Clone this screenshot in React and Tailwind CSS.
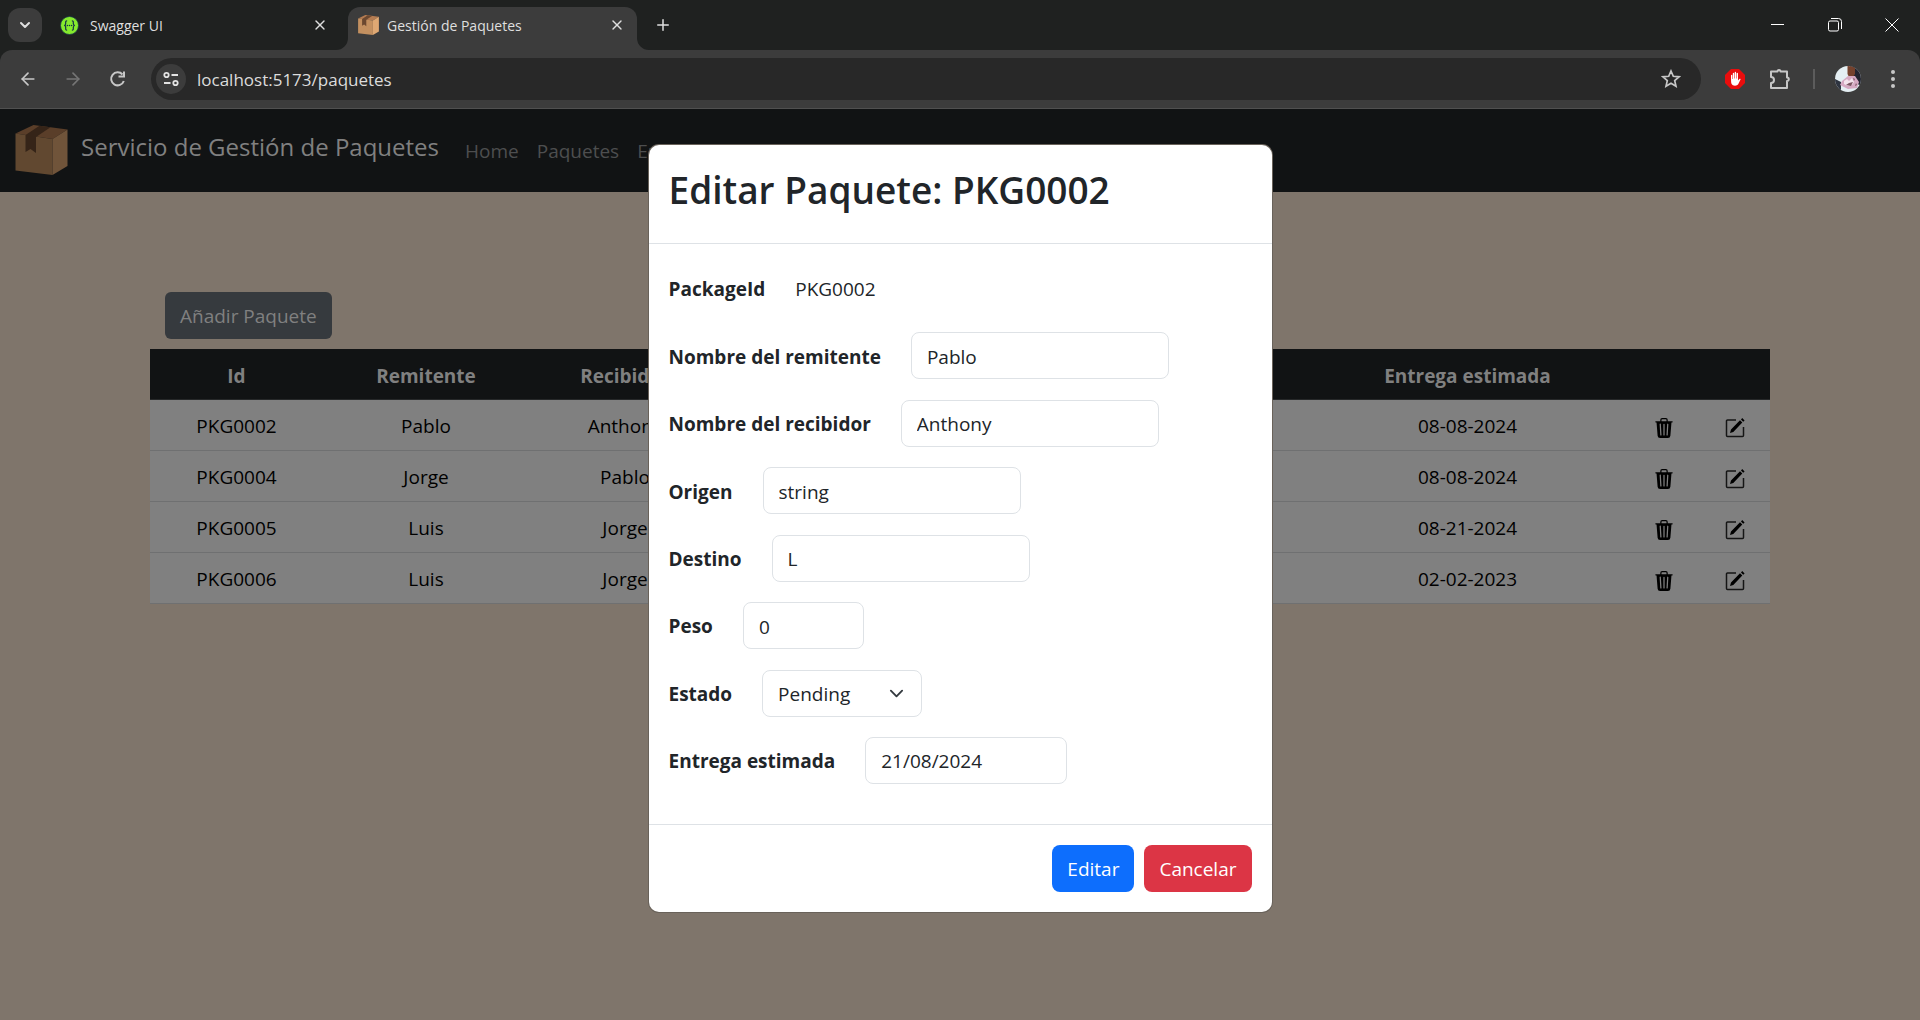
import { BsTrash3Fill } from 'react-icons/bs';
import { ChevronDown, X, Plus, ArrowLeft, ArrowRight } from 'lucide-react';

function BoxIcon({ className, dim }) {
  const c = dim
    ? { top: '#5a3e29', front: '#614830', side: '#70543a', tape: '#352418' }
    : { top: '#b57c52', front: '#c39060', side: '#dfa873', tape: '#6b4830' };
  return (
    <svg viewBox="0 0 52 50" className={className} aria-hidden="true">
      <path d="M0 8.500 18 0 52 4.500 37 14z" fill={c.top} />
      <path d="M0 8.500 37 14V50L0 45.500z" fill={c.front} />
      <path d="M37 14 52 4.500V41L37 50z" fill={c.side} />
      <path d="M24 .8 35 2.300 20.500 12V28L15 24 10 27V10z" fill={c.tape} />
    </svg>
  );
}

function SwaggerIcon() {
  return (
    <svg viewBox="0 0 20 20" className="size-[19px] shrink-0" aria-hidden="true">
      <circle cx="10" cy="10" r="9.500" fill="#85ea2d" stroke="#173647" strokeWidth=".8" />
      <g stroke="#173647" strokeWidth="1.300" fill="none">
        <path d="M7.500 5C5.500 5 6 6.500 6 8c0 1.300-.5 2-1.700 2 1.200 0 1.700.7 1.700 2 0 1.500-.5 3 1.500 3M12.500 5c2 0 1.500 1.500 1.500 3 0 1.300.5 2 1.700 2-1.200 0-1.700.7-1.700 2 0 1.500.5 3-1.500 3" />
      </g>
      <g fill="#173647"><circle cx="7.800" cy="10" r=".8" /><circle cx="10" cy="10" r=".8" /><circle cx="12.200" cy="10" r=".8" /></g>
    </svg>
  );
}

function TabBar() {
  return (
    <div className="flex h-[50px] items-start bg-[#1f2120] pl-2 text-[#dfdfdf]">
      <button aria-label="Buscar pestañas" className="mt-2 grid h-[34px] w-[34px] place-items-center rounded-xl bg-[#3c3c3c]">
        <ChevronDown className="size-4" strokeWidth={3} />
      </button>
      <div className="mt-[7px] flex h-9 w-[306px] items-center pr-5 pl-[18px] text-[14px]">
        <SwaggerIcon />
        <span className="flex-1 pl-[11px]">Swagger UI</span>
        <button aria-label="Cerrar Swagger UI"><X className="size-4" /></button>
      </div>
      <div className="relative mt-[7px] flex h-[43px] w-[289px] items-start rounded-t-xl bg-[#3c3c3c] pr-[12px] pl-[10px] text-[14px]">
        <svg viewBox="0 0 12 12" className="absolute bottom-0 -left-3 size-3" aria-hidden="true"><path d="M12 0v12H0A12 12 0 0 0 12 0z" fill="#3c3c3c" /></svg>
        <svg viewBox="0 0 12 12" className="absolute -right-3 bottom-0 size-3" aria-hidden="true"><path d="M0 0v12h12A12 12 0 0 1 0 0z" fill="#3c3c3c" /></svg>
        <div className="flex h-9 flex-1 items-center">
          <BoxIcon className="h-5 w-[21px]" />
          <span className="flex-1 pl-2">Gestión de Paquetes</span>
          <button aria-label="Cerrar Gestión de Paquetes"><X className="size-4" /></button>
        </div>
      </div>
      <button aria-label="Nueva pestaña" className="mt-4 ml-[17px]"><Plus className="size-[18px]" /></button>
      <div className="mt-[18px] ml-auto flex items-center gap-[43px] pr-[21px]">
        <button aria-label="Minimizar"><svg viewBox="0 0 14 14" className="size-[14px]"><path d="M0 6.500h13" stroke="#fff" /></svg></button>
        <button aria-label="Restaurar"><svg viewBox="0 0 14 14" className="size-[14px]" fill="none" stroke="#fff"><rect x=".5" y="3" width="10" height="10" rx="1.500" /><path d="M3 .5h7.500a3 3 0 0 1 3 3V11" /></svg></button>
        <button aria-label="Cerrar ventana"><svg viewBox="0 0 14 14" className="size-[14px]" stroke="#fff"><path d="m.5.5 13 13m0-13-13 13" /></svg></button>
      </div>
    </div>
  );
}

function Toolbar() {
  return (
    <div className="bg-[#1f2120]">
      <div className="flex h-[59px] items-center rounded-t-xl border-b border-[#505050] bg-[#3c3c3c] pr-[21px] pl-[18px] text-[#c7c7c7]">
        <button aria-label="Atrás"><ArrowLeft className="size-5" /></button>
        <button aria-label="Adelante" className="ml-[25px] text-[#757575]"><ArrowRight className="size-5" /></button>
        <button aria-label="Recargar" className="ml-6">
          <svg viewBox="0 0 20 20" className="size-5" fill="none" stroke="currentColor" strokeWidth="2"><path d="M15.500 5.500A6.500 6.500 0 1 0 16.800 12M17 2.500V7.500H11.500" /></svg>
        </button>
        <div className="ml-6 flex h-[42px] flex-1 items-center rounded-full bg-[#282828] pr-5 pl-[5px]">
          <button aria-label="Información del sitio" className="grid size-[30px] place-items-center rounded-full bg-[#3c3c3c]">
            <svg viewBox="0 0 16 16" className="size-4" fill="none" stroke="#e3e3e3" strokeWidth="1.800"><circle cx="3.500" cy="4" r="2.200" /><path d="M8.500 4H15M1 12h6.500" /><circle cx="12.500" cy="12" r="2.200" /></svg>
          </button>
          <input aria-label="Dirección" defaultValue="localhost:5173/paquetes" className="ml-[11px] min-w-0 flex-1 bg-transparent pt-0.5 text-[17px] text-[#dcdcdc] outline-none" />
          <button aria-label="Añadir a marcadores">
            <svg viewBox="0 0 20 20" className="size-5" fill="none" stroke="currentColor" strokeWidth="1.700"><path d="m10 2 2.300 5.300 5.700.5-4.300 3.800 1.300 5.700-5-3-5 3 1.300-5.700L2 7.800l5.700-.5z" /></svg>
          </button>
        </div>
        <button aria-label="Bloqueador de anuncios" className="ml-6">
          <svg viewBox="0 0 20 20" className="size-5"><path d="M6 0h8l6 6v8l-6 6H6l-6-6V6z" fill="#e90d0d" /><path d="M6 6.500c0-1 1.300-1 1.300 0V10h.5V4.500c0-1 1.400-1 1.400 0V9.500h.5V3.600c0-1 1.400-1 1.400 0v5.900h.5V4.500c0-1 1.400-1 1.400 0v7l1.300-1.500c.7-.7 1.600-.1 1.200.6l-2.300 4.600C12.300 17 7.600 17.500 6.400 14.500 6 13.500 6 10 6 6.500z" fill="#fff" /></svg>
        </button>
        <button aria-label="Extensiones" className="ml-6">
          <svg viewBox="0 0 22 22" className="size-[22px]" fill="none" stroke="currentColor" strokeWidth="2" strokeLinejoin="round"><path d="M2 3.500h6.500a1.500 1.500 0 0 1 3 0H18V9.500a1.800 1.800 0 0 1 0 3.600V20H2V15a2.800 2.800 0 0 0 0-6z" /></svg>
        </button>
        <span className="ml-[22px] h-5 w-[2px] bg-[#5c5c5c]" />
        <button aria-label="Perfil" className="ml-5">
          <svg viewBox="0 0 26 26" className="size-[26px]">
            <clipPath id="avatar"><circle cx="13" cy="13" r="13" /></clipPath>
            <g clipPath="url(#avatar)"><path d="M0 0h26v26H0z" fill="#e4eef2" /><path d="M15 0h11v20l-7-4z" fill="#23242f" /><path d="M0 13l6 3v10H0z" fill="#2e3440" /><path d="M12.500 0H20v8l-2 3h-4l-1.500-3z" fill="#75412c" /><path d="M7 15l6-5 7 0 4 6-2 6-9 1-8-4z" fill="#d5a9c2" /><path d="m9 15 3-2 2 2 3-3 2 4-2 3-4 1-4-2z" fill="#f3e3ec" /><path d="m14 17 4-1-2 4-5-1zM18 12l2 1-1 2zM21 17l1 2-2 1z" fill="#7b5662" /></g>
          </svg>
        </button>
        <button aria-label="Menú" className="ml-[26px]"><svg viewBox="0 0 12 20" className="h-5 w-3" fill="currentColor"><circle cx="6" cy="3" r="2" /><circle cx="6" cy="10" r="2" /><circle cx="6" cy="17" r="2" /></svg></button>
      </div>
    </div>
  );
}

const rows = [
  ['PKG0002', 'Pablo', 'Anthony', '08-08-2024'],
  ['PKG0004', 'Jorge', 'Pablo', '08-08-2024'],
  ['PKG0005', 'Luis', 'Jorge', '08-21-2024'],
  ['PKG0006', 'Luis', 'Jorge', '02-02-2023'],
];

function EditIcon() {
  return (
    <svg viewBox="0 0 20 20" className="size-5" aria-hidden="true">
      <path d="M11 2H2.500a1 1 0 0 0-1 1v14.500a1 1 0 0 0 1 1h15a1 1 0 0 0 1-1V9" fill="none" stroke="#151515" strokeWidth="1.500" />
      <path d="m15 2.300 2.300 2.300-9 9.500L5 15l1-3.500zM16 1.400 17.200 0 19.600 2.400 18.200 3.700z" fill="#000" />
    </svg>
  );
}

function PackagesPage() {
  return (
    <div className="flex-1 bg-[#7f756b] text-[19px]">
      <nav className="flex h-[83px] items-center bg-[#111314] pl-[15px]">
        <a href="#inicio" className="flex items-center pb-0.5 text-[24px] text-[#808080]">
          <BoxIcon dim className="h-[50px] w-[53px]" />
          <span className="pb-1.5 pl-[13px]">Servicio de Gestión de Paquetes</span>
        </a>
        <div className="flex gap-[18px] pt-0.5 pl-[26px] text-[#4d4e4f]">
          <a href="#home">Home</a>
          <a href="#paquetes">Paquetes</a>
          <a href="#envios">Envios</a>
          <a href="#estados">Estados</a>
        </div>
      </nav>
      <main className="px-[150px] pt-[100px]">
        <button className="ml-[15px] h-[47px] rounded-md bg-[#363a3e] px-[15px] pt-0.5 text-[#808080]">Añadir Paquete</button>
        <table className="mt-[10px] w-full table-fixed text-center">
          <colgroup>
            <col className="w-[173px]" /><col className="w-[206px]" /><col className="w-[192px]" /><col /><col className="w-[321px]" /><col className="w-[72px]" /><col className="w-[70px]" />
          </colgroup>
          <thead>
            <tr className="h-[50px] border-b border-[#262829] bg-[#111314] text-[#808080]">
              <th className="pt-1 font-bold">Id</th>
              <th className="pt-1 font-bold">Remitente</th>
              <th className="pt-1 font-bold">Recibidor</th>
              <th />
              <th className="pt-1 font-bold">Entrega estimada</th>
              <th />
              <th />
            </tr>
          </thead>
          <tbody>
            {rows.map(([id, sender, receiver, date]) => (
              <tr key={id} className="h-[51px] border-b border-[#6f7071] bg-[#808080] text-black">
                <td className="pt-1">{id}</td>
                <td className="pt-1">{sender}</td>
                <td className="pt-1">{receiver}</td>
                <td />
                <td className="pt-1">{date}</td>
                <td className="pt-1"><button aria-label="Eliminar" className="align-middle"><BsTrash3Fill className="size-5" /></button></td>
                <td className="pt-1"><button aria-label="Editar fila" className="align-middle"><EditIcon /></button></td>
              </tr>
            ))}
          </tbody>
        </table>
      </main>
    </div>
  );
}

const field = 'h-[47px] rounded-lg border border-[#dee2e6] bg-white px-[15px] pt-0.5 outline-none';

function Row({ id, label, children }) {
  return (
    <div className="flex h-[47px] items-center gap-[30px]">
      <label htmlFor={id} className="pt-0.5 font-bold">{label}</label>
      {children}
    </div>
  );
}

function EditModal() {
  return (
    <div className="absolute inset-x-0 top-[145px] flex justify-center">
      <div role="dialog" aria-labelledby="modal-title" className="w-[623px] rounded-[10px] bg-white text-[19px] text-[#212529] shadow-[0_0_0_1px_#69625a]">
        <header className="h-[99px] border-b border-[#dee2e6] px-5 pt-5">
          <h1 id="modal-title" className="text-[37px] leading-[50px] font-semibold">Editar Paquete: PKG0002</h1>
        </header>
        <form className="flex min-h-[580px] flex-col justify-between px-5 pt-[21px] pb-10">
          <Row id="pid" label="PackageId"><output id="pid" className="pt-0.5">PKG0002</output></Row>
          <Row id="rem" label="Nombre del remitente"><input id="rem" defaultValue="Pablo" className={`${field} w-[258px]`} /></Row>
          <Row id="rec" label="Nombre del recibidor"><input id="rec" defaultValue="Anthony" className={`${field} w-[258px]`} /></Row>
          <Row id="ori" label="Origen"><input id="ori" defaultValue="string" className={`${field} w-[258px]`} /></Row>
          <Row id="des" label="Destino"><input id="des" defaultValue="L" className={`${field} w-[258px]`} /></Row>
          <Row id="pes" label="Peso"><input id="pes" defaultValue="0" className={`${field} w-[121px]`} /></Row>
          <Row id="est" label="Estado">
            <div className="relative">
              <select id="est" className={`${field} w-[160px] appearance-none`}><option>Pending</option></select>
              <svg viewBox="0 0 16 16" className="pointer-events-none absolute top-4 right-[18px] size-[15px]" fill="none" stroke="#343a40" strokeWidth="2" strokeLinecap="round" strokeLinejoin="round" aria-hidden="true"><path d="m2 5 6 6 6-6" /></svg>
            </div>
          </Row>
          <Row id="ent" label="Entrega estimada"><input id="ent" defaultValue="21/08/2024" className={`${field} w-[202px]`} /></Row>
        </form>
        <footer className="flex justify-end gap-[10px] border-t border-[#dee2e6] p-5 text-white">
          <button className="h-[47px] rounded-lg bg-[#0d6efd] px-[15px] pt-0.5">Editar</button>
          <button className="h-[47px] rounded-lg bg-[#dc3545] px-[15px] pt-0.5">Cancelar</button>
        </footer>
      </div>
    </div>
  );
}

export default function App() {
  return (
    <div className="relative flex min-h-screen flex-col font-['Open_Sans','Noto_Sans',sans-serif]">
      <TabBar />
      <Toolbar />
      <PackagesPage />
      <EditModal />
    </div>
  );
}
